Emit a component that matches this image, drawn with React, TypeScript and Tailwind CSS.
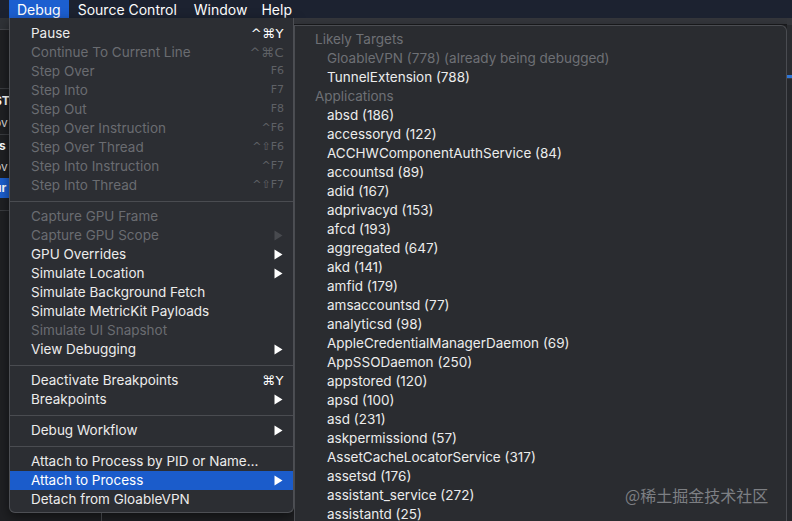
import React from 'react';

type Item =
  | { kind: 'sep' }
  | { kind: 'item'; label: string; disabled?: boolean; shortcut?: string; small?: boolean; arrow?: boolean; active?: boolean };

const debugMenu: Item[] = [
  { kind: 'item', label: 'Pause', shortcut: '^⌘Y' },
  { kind: 'item', label: 'Continue To Current Line', shortcut: '^⌘C', disabled: true },
  { kind: 'item', label: 'Step Over', shortcut: 'F6', small: true, disabled: true },
  { kind: 'item', label: 'Step Into', shortcut: 'F7', small: true, disabled: true },
  { kind: 'item', label: 'Step Out', shortcut: 'F8', small: true, disabled: true },
  { kind: 'item', label: 'Step Over Instruction', shortcut: '^F6', small: true, disabled: true },
  { kind: 'item', label: 'Step Over Thread', shortcut: '^⇧F6', small: true, disabled: true },
  { kind: 'item', label: 'Step Into Instruction', shortcut: '^F7', small: true, disabled: true },
  { kind: 'item', label: 'Step Into Thread', shortcut: '^⇧F7', small: true, disabled: true },
  { kind: 'sep' },
  { kind: 'item', label: 'Capture GPU Frame', disabled: true },
  { kind: 'item', label: 'Capture GPU Scope', disabled: true, arrow: true },
  { kind: 'item', label: 'GPU Overrides', arrow: true },
  { kind: 'item', label: 'Simulate Location', arrow: true },
  { kind: 'item', label: 'Simulate Background Fetch' },
  { kind: 'item', label: 'Simulate MetricKit Payloads' },
  { kind: 'item', label: 'Simulate UI Snapshot', disabled: true },
  { kind: 'item', label: 'View Debugging', arrow: true },
  { kind: 'sep' },
  { kind: 'item', label: 'Deactivate Breakpoints', shortcut: '⌘Y' },
  { kind: 'item', label: 'Breakpoints', arrow: true },
  { kind: 'sep' },
  { kind: 'item', label: 'Debug Workflow', arrow: true },
  { kind: 'sep' },
  { kind: 'item', label: 'Attach to Process by PID or Name…' },
  { kind: 'item', label: 'Attach to Process', arrow: true, active: true },
  { kind: 'item', label: 'Detach from GloableVPN' },
];

const processes = [
  'absd (186)',
  'accessoryd (122)',
  'ACCHWComponentAuthService (84)',
  'accountsd (89)',
  'adid (167)',
  'adprivacyd (153)',
  'afcd (193)',
  'aggregated (647)',
  'akd (141)',
  'amfid (179)',
  'amsaccountsd (77)',
  'analyticsd (98)',
  'AppleCredentialManagerDaemon (69)',
  'AppSSODaemon (250)',
  'appstored (120)',
  'apsd (100)',
  'asd (231)',
  'askpermissiond (57)',
  'AssetCacheLocatorService (317)',
  'assetsd (176)',
  'assistant_service (272)',
  'assistantd (25)',
];

function Arrow({ dim }: { dim?: boolean }) {
  return (
    <svg width="9" height="11" viewBox="0 0 9 11" className={dim ? 'opacity-30' : ''}>
      <path d="M0.5 0.5 L8.5 5.5 L0.5 10.5 Z" fill="currentColor" />
    </svg>
  );
}

function MenuRow({ item }: { item: Item }) {
  if (item.kind === 'sep') {
    return (
      <div className="h-[12px] flex items-center">
        <div className="h-px w-full bg-[#4a4c51]" />
      </div>
    );
  }
  const color = item.active ? 'bg-[#1b5ccb] text-white' : item.disabled ? 'text-[#6a6c71]' : 'text-[#ececec]';
  return (
    <div className={`h-[19px] flex items-center pl-[21px] pr-[9px] ${color}`}>
      <span className="flex-1 whitespace-nowrap">{item.label}</span>
      {item.shortcut && (
        <span
          className={`whitespace-nowrap font-['DejaVu_Sans',sans-serif] ${item.small ? 'text-[11px]' : 'text-[13px] tracking-[0.5px]'} ${
            item.disabled ? 'text-[#5f6166]' : 'text-white'
          }`}
        >
          {item.shortcut}
        </span>
      )}
      {item.arrow && (
        <span className={`pr-[1px] ${item.disabled ? 'text-[#8a8c90]' : 'text-white'}`}>
          <Arrow dim={item.disabled} />
        </span>
      )}
    </div>
  );
}

export default function App() {
  return (
    <div className="w-[792px] h-[521px] overflow-hidden bg-[#1f2023] relative font-['Inter','Noto_Sans',sans-serif] text-[13.5px]">
      {/* menu bar */}
      <div className="h-[18px] bg-[#1c2230] flex items-center text-[14px] text-white">
        <div className="ml-[9px] h-full px-[8px] bg-[#1c5fd0] flex items-center">Debug</div>
        <div className="ml-[9px]">Source Control</div>
        <div className="ml-[17px]">Window</div>
        <div className="ml-[14px]">Help</div>
      </div>

      <div className="flex h-[503px]">
        {/* background app sliver on the left */}
        <div className="w-[9px] flex flex-col text-[12px] font-bold text-white overflow-hidden leading-none">
          <div className="h-[12px] shrink-0 bg-[#2f3237] border-b border-[#44464b]" />
          <div className="h-[58px] shrink-0" />
          <div className="h-[24px] shrink-0 -ml-[6px] flex items-center border-t border-[#3a3c40]">ST</div>
          <div className="h-[22px] shrink-0 -ml-[6px] flex items-center font-normal text-[#dcdcdc]">ov</div>
          <div className="h-[22px] shrink-0 -ml-[6px] flex items-center border-t border-[#3a3c40]">rs</div>
          <div className="h-[22px] shrink-0 -ml-[6px] flex items-center font-normal text-[#dcdcdc]">ov</div>
          <div className="h-[20px] shrink-0 -ml-[6px] flex items-center bg-[#1c5fd0]">ur</div>
          <div className="mt-[12px] h-px bg-[#3a3c40]" />
        </div>

        {/* debug menu */}
        <div className="w-[285px] self-start flex flex-col">
          <div className="bg-[#2c2e33] border-x border-b border-[#4d4f54] rounded-b-[6px] pt-[6px] pb-[3px] shadow-[0_4px_12px_rgba(0,0,0,0.5)]">
            {debugMenu.map((item, i) => (
              <MenuRow key={i} item={item} />
            ))}
          </div>
          <div className="flex-1 flex">
            <div className="w-[92px]" />
            <div className="w-px h-[12px] bg-[#3a3c40]" />
          </div>
        </div>

        {/* attach to process submenu */}
        <div className="w-[493px] flex flex-col overflow-hidden">
          <div className="h-[7px] shrink-0 bg-[#34363b] border-b border-[#1a1b1e]" />
          <div className="flex-1 min-h-0 overflow-hidden bg-[#2a2c30] border-l border-t border-r border-[#4a4c51] rounded-tr-[6px] pt-[4px] shadow-[0_4px_12px_rgba(0,0,0,0.5)]">
            <div className="h-[19px] flex items-center pl-[20px] text-[#6e7075]">Likely Targets</div>
            <div className="h-[19px] flex items-center pl-[32px] text-[#6e7075]">GloableVPN (778) (already being debugged)</div>
            <div className="h-[19px] flex items-center pl-[32px] text-[#ececec]">TunnelExtension (788)</div>
            <div className="h-[19px] flex items-center pl-[20px] text-[#6e7075]">Applications</div>
            {processes.map((p) => (
              <div key={p} className="h-[19px] flex items-center pl-[32px] text-[#ececec] whitespace-nowrap">
                {p}
              </div>
            ))}
          </div>
        </div>

        {/* background app sliver on the right */}
        <div className="flex-1 flex flex-col">
          <div className="h-[7px] shrink-0 bg-[#34363b]" />
          <div className="h-[50px] shrink-0 bg-[#2a2c30]" />
          <div className="h-[3px] shrink-0 bg-[#2f76d6]" />
          <div className="flex-1 bg-[#26282c] border-t border-[#3a3c40]" />
        </div>
      </div>

      <div className="absolute left-[625px] top-[483px] text-[16px] text-[#7d7f83] font-['Noto_Sans_CJK_SC',sans-serif]">
        @稀土掘金技术社区
      </div>
    </div>
  );
}
